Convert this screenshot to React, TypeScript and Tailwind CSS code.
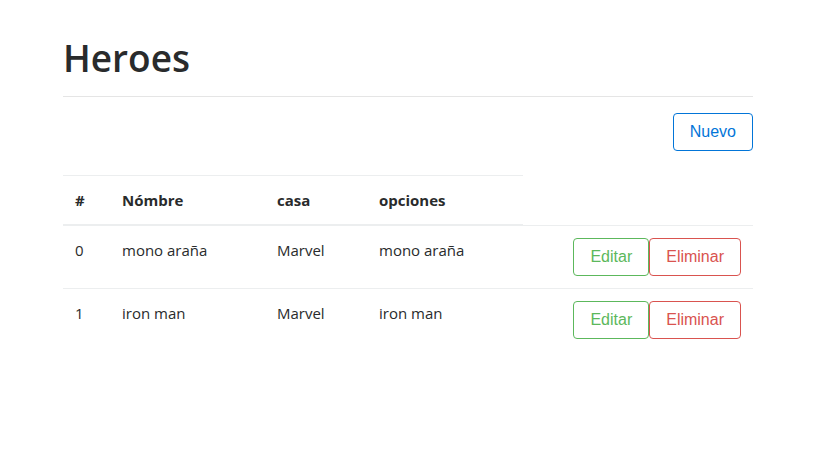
import React from "react";

const heroes = [
  { id: 0, nombre: "mono araña", casa: "Marvel", opciones: "mono araña" },
  { id: 1, nombre: "iron man", casa: "Marvel", opciones: "iron man" },
];

export default function App() {
  return (
    <div
      className="min-h-[466px] bg-white text-[#292b2c]"
      style={{ fontFamily: '"Open Sans", "Noto Sans", sans-serif' }}
    >
      <div className="ml-[48px] w-[720px] px-[15px] pt-[36px]">
        <h1 className="text-[37px] font-semibold leading-[44px] text-[#292b2c]">Heroes</h1>
        <hr className="mt-4 border-0 border-t border-[rgba(0,0,0,0.1)]" />
        <div className="mt-4 flex justify-end">
          <button
            className="rounded border border-[#0275d8] bg-white px-4 py-2 text-base leading-5 text-[#0275d8]"
            style={{ fontFamily: '"Liberation Sans", Arial, sans-serif' }}
          >
            Nuevo
          </button>
        </div>
        <table className="mt-6 w-full border-collapse text-[15px] leading-6">
          <thead>
            <tr>
              <th className="w-[47px] border-t border-b-2 border-[#eceeef] p-3 text-left align-bottom font-bold">#</th>
              <th className="w-[155px] border-t border-b-2 border-[#eceeef] p-3 text-left align-bottom font-bold">Nómbre</th>
              <th className="w-[102px] border-t border-b-2 border-[#eceeef] p-3 text-left align-bottom font-bold">casa</th>
              <th className="w-[156px] border-t border-b-2 border-[#eceeef] p-3 text-left align-bottom font-bold">opciones</th>
            </tr>
          </thead>
          <tbody>
            {heroes.map((h) => (
              <tr key={h.id}>
                <td className="border-t border-[#eceeef] p-3 align-top">{h.id}</td>
                <td className="border-t border-[#eceeef] p-3 align-top">{h.nombre}</td>
                <td className="border-t border-[#eceeef] p-3 align-top">{h.casa}</td>
                <td className="border-t border-[#eceeef] p-3 align-top">{h.opciones}</td>
                <td className="border-t border-[#eceeef] p-3 align-top">
                  <div
                    className="flex justify-end"
                    style={{ fontFamily: '"Liberation Sans", Arial, sans-serif' }}
                  >
                    <button className="rounded border border-[#5cb85c] bg-white px-4 py-2 text-base leading-5 text-[#5cb85c]">
                      Editar
                    </button>
                    <button className="rounded border border-[#d9534f] bg-white px-4 py-2 text-base leading-5 text-[#d9534f]">
                      Eliminar
                    </button>
                  </div>
                </td>
              </tr>
            ))}
          </tbody>
        </table>
      </div>
    </div>
  );
}
